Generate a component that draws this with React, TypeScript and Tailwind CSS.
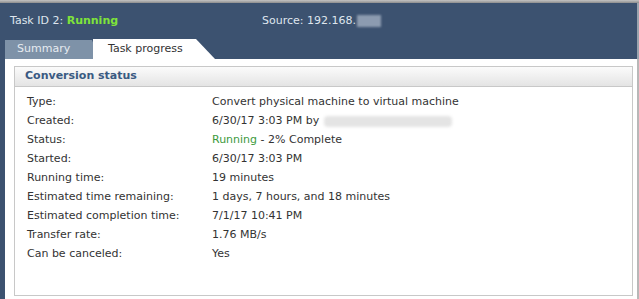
import React from "react";

function App() {
  const rows: { label: string; value: React.ReactNode }[] = [
    { label: "Type:", value: "Convert physical machine to virtual machine" },
    {
      label: "Created:",
      value: (
        <span className="flex items-center">
          6/30/17 3:03 PM by
          <span className="ml-[5px] inline-block h-[11px] w-[128px] rounded-sm bg-[#e4e4e4] blur-[1.5px]" />
        </span>
      ),
    },
    {
      label: "Status:",
      value: (
        <span>
          <span className="text-[#3c9a3c]">Running</span> - 2% Complete
        </span>
      ),
    },
    { label: "Started:", value: "6/30/17 3:03 PM" },
    { label: "Running time:", value: "19 minutes" },
    { label: "Estimated time remaining:", value: "1 days, 7 hours, and 18 minutes" },
    { label: "Estimated completion time:", value: "7/1/17 10:41 PM" },
    { label: "Transfer rate:", value: "1.76 MB/s" },
    { label: "Can be canceled:", value: "Yes" },
  ];

  return (
    <div
      className="h-[299px] w-[639px] overflow-hidden bg-white text-[11px] text-[#333]"
      style={{ fontFamily: "Tahoma, 'DejaVu Sans', Verdana, sans-serif" }}
    >
      {/* top strip */}
      <div className="h-[3px] bg-gradient-to-b from-[#c4c4c4] to-[#8e8e8e]" />

      {/* header */}
      <div className="flex h-[56px] flex-col bg-[#3c5270] border-r-2 border-[#9aa4ae]">
        <div className="flex h-[36px] items-center pl-[10px] text-[11px] text-[#dfe6ee]">
          <span className="w-[252px]">
            Task ID 2: <span className="font-bold text-[#7fe33a]">Running</span>
          </span>
          <span className="flex items-center">
            Source: 192.168.
            <span className="ml-[1px] inline-block h-[12px] w-[24px] bg-[#8c9bb0] blur-[1px]" />
          </span>
        </div>
        <div className="mt-auto flex h-[20px] items-end pl-[5px]">
          <div className="relative flex h-[19px] w-[87px] items-center bg-[#7e92a8] pl-[12px] text-[#e6ebf0]">
            Summary
            <svg className="absolute right-[-8px] top-0" width="8" height="19" viewBox="0 0 8 19">
              <polygon points="0,0 8,19 0,19" fill="#7e92a8" />
            </svg>
          </div>
          <div className="relative z-10 ml-[1px] flex h-[20px] w-[102px] items-center bg-white pl-[15px] text-[#333]">
            Task progress
            <svg className="absolute right-[-20px] top-0" width="20" height="20" viewBox="0 0 20 20">
              <polygon points="0,0 1,0 20,20 0,20" fill="#ffffff" />
            </svg>
          </div>
        </div>
      </div>

      {/* body */}
      <div className="flex h-[240px] border-l-[5px] border-[#3c5270] border-r-2 border-r-[#b8b8b8] pl-[9px] pr-[4px] pt-[7px] pb-[3px]">
        <div className="flex flex-1 flex-col border border-[#c8c8c8]">
          <div className="flex h-[20px] items-center border-b border-[#c8c8c8] bg-gradient-to-b from-[#fbfbfb] to-[#e4e4e4] pl-[10px] text-[11px] font-bold text-[#3a5a82]">
            Conversion status
          </div>
          <div className="flex flex-col pl-[12px] pt-[6px]">
            {rows.map((r) => (
              <div key={r.label} className="flex h-[19px] items-center">
                <span className="w-[185px] shrink-0">{r.label}</span>
                <span>{r.value}</span>
              </div>
            ))}
          </div>
        </div>
      </div>
    </div>
  );
}

export default App;
